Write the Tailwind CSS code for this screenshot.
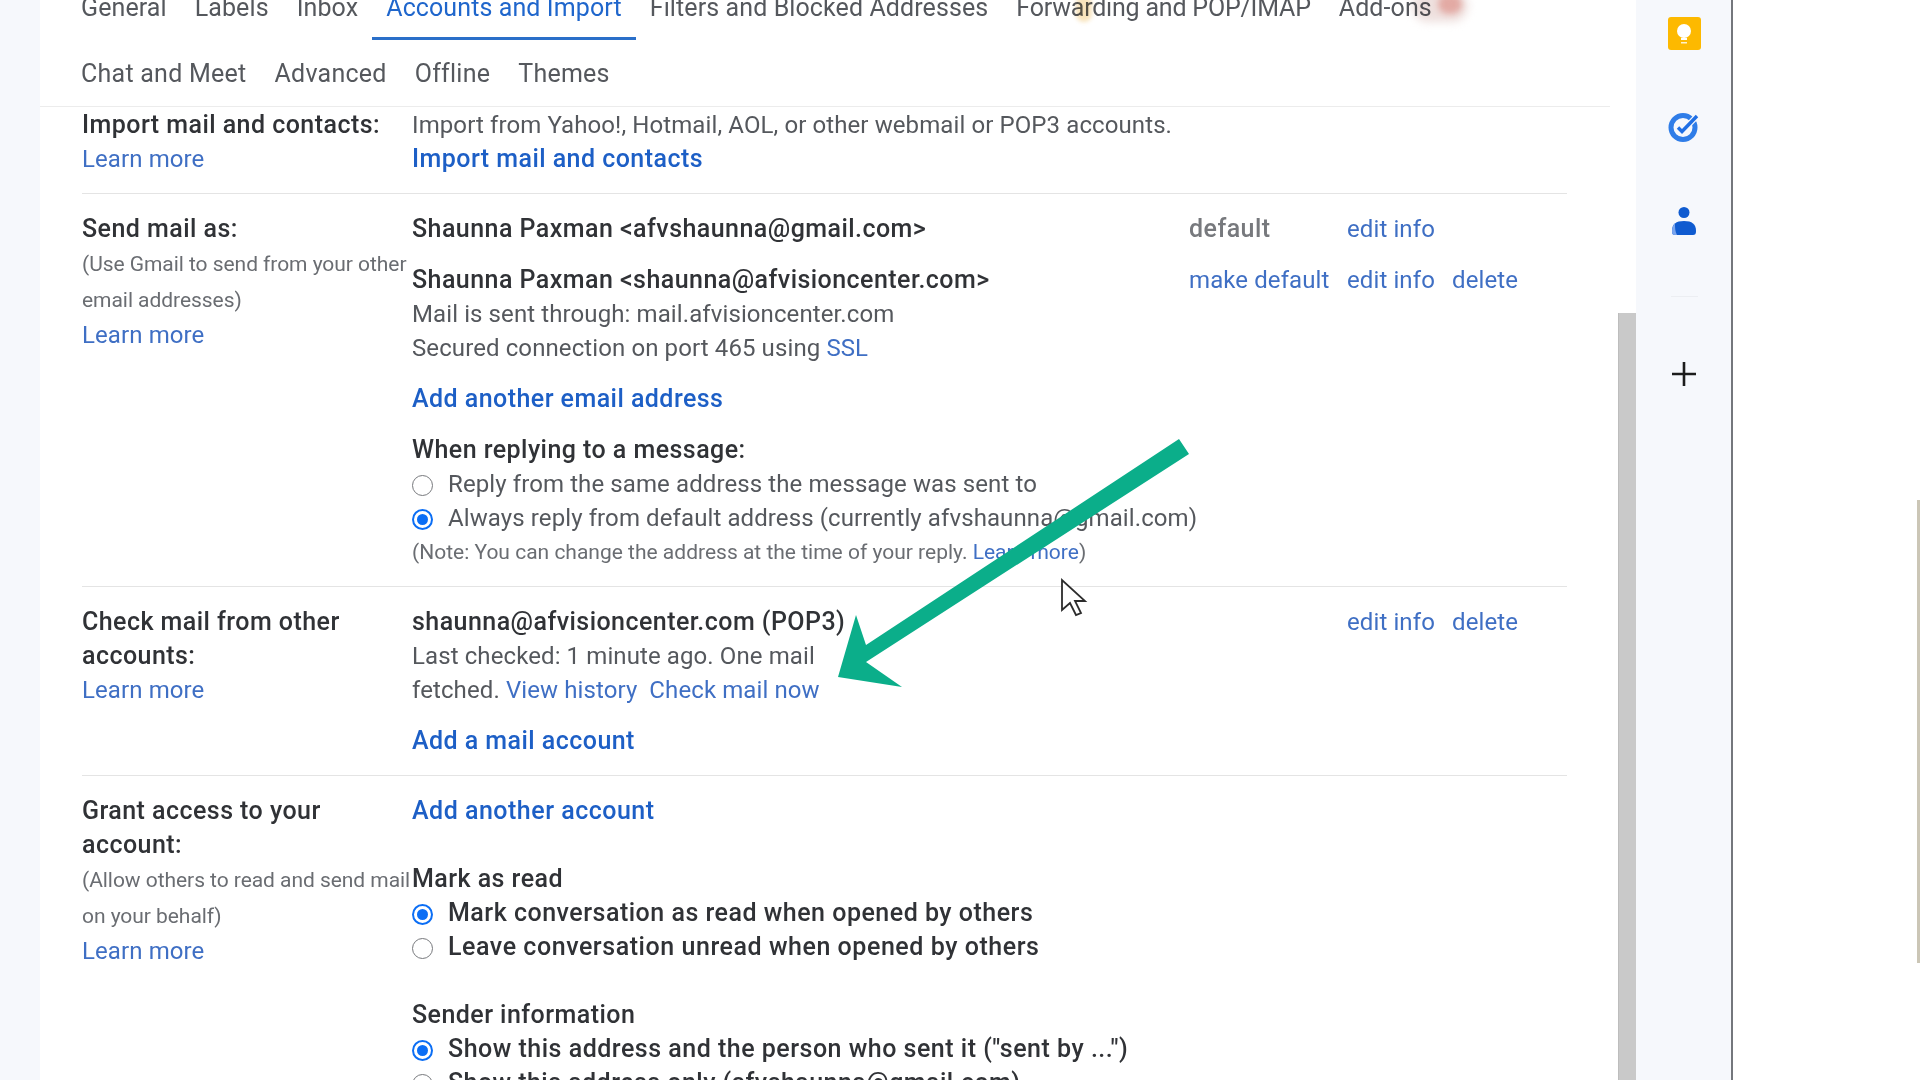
<!DOCTYPE html>
<html lang="en">
<head>
  <meta charset="UTF-8" />
  <title>Gmail Settings - Accounts and Import</title>
  <script src="https://cdn.jsdelivr.net/npm/@tailwindcss/browser@4"></script>
</head>
<body class="bg-white h-screen overflow-hidden [font-family:Roboto,sans-serif] text-[24px] leading-[34px] tracking-[0.1px] text-[#55585d]">
  <div class="relative flex h-[1080px] overflow-hidden">

    <!-- left rail -->
    <div class="w-[40px] shrink-0 bg-[#f6f8fc]"></div>

    <!-- settings pane -->
    <div class="w-[1578px] shrink-0 bg-white blur-[0.7px]">
      <!-- tabs -->
      <div class="h-[116px] -mt-[9px] pl-[27px] flex flex-col border-b border-[#ececec] w-[1570px] text-[25px]">
        <div class="flex h-[49px] tracking-[0.1px]">
          <div class="px-[14px]">General</div>
          <div class="px-[14px]">Labels</div>
          <div class="px-[14px]">Inbox</div>
          <div class="px-[14px] h-[49px] text-[#1f66cc] border-b-[3px] border-[#2a6fc9]">Accounts and Import</div>
          <div class="px-[14px]">Filters and Blocked Addresses</div>
          <div class="px-[14px] tracking-[-0.2px]">Forwarding and POP/IMAP</div>
          <div class="px-[14px]">Add-ons</div>
        </div>
        <div class="flex mt-[17px] tracking-[0.25px]">
          <div class="px-[14px]">Chat and Meet</div>
          <div class="px-[14px]">Advanced</div>
          <div class="px-[14px]">Offline</div>
          <div class="px-[14px]">Themes</div>
        </div>
      </div>

      <div class="pl-[42px] w-[1527px]">
        <!-- import -->
        <div class="flex pt-px pb-[17px] border-b border-[#e4e4e4]">
          <div class="w-[330px] shrink-0">
            <div class="font-medium text-[25px] tracking-[0.45px] text-[#303236]">Import mail and contacts:</div>
            <div class="text-[#3f6fc4]">Learn more</div>
          </div>
          <div>
            <div>Import from Yahoo!, Hotmail, AOL, or other webmail or POP3 accounts.</div>
            <div class="font-medium text-[25px] tracking-[0.45px] text-[#1d5fc6]">Import mail and contacts</div>
          </div>
        </div>

        <!-- send mail as -->
        <div class="flex pt-[18px] pb-[17px] border-b border-[#e4e4e4]">
          <div class="w-[330px] shrink-0">
            <div class="font-medium text-[25px] tracking-[0.45px] text-[#303236]">Send mail as:</div>
            <div class="text-[21px] leading-[36px] tracking-[-0.05px] text-[#6a6d72] whitespace-nowrap">(Use Gmail to send from your other</div>
            <div class="text-[21px] leading-[36px] tracking-[-0.05px] text-[#6a6d72]">email addresses)</div>
            <div class="text-[#3f6fc4]">Learn more</div>
          </div>
          <div class="flex-1">
            <div class="flex">
              <div class="w-[777px] font-medium text-[25px] tracking-[0.45px] text-[#303236]">Shaunna Paxman &lt;afvshaunna@gmail.com&gt;</div>
              <div class="w-[158px] font-medium text-[25px] tracking-[0.45px] text-[#77797d]">default</div>
              <div class="text-[#3f6fc4]">edit info</div>
            </div>
            <div class="flex mt-[17px]">
              <div class="w-[777px]">
                <div class="font-medium text-[25px] tracking-[0.45px] text-[#303236]">Shaunna Paxman &lt;shaunna@afvisioncenter.com&gt;</div>
                <div>Mail is sent through: mail.afvisioncenter.com</div>
                <div>Secured connection on port 465 using <span class="text-[#3f6fc4]">SSL</span></div>
              </div>
              <div class="w-[158px] text-[#3f6fc4]">make default</div>
              <div class="w-[105px] text-[#3f6fc4]">edit info</div>
              <div class="text-[#3f6fc4]">delete</div>
            </div>
            <div class="mt-[17px] font-medium text-[25px] tracking-[0.45px] text-[#1d5fc6]">Add another email address</div>
            <div class="mt-[17px] font-medium text-[25px] tracking-[0.45px] text-[#303236]">When replying to a message:</div>
            <div class="flex items-center">
              <span class="w-[21px] h-[21px] rounded-full border-[1.5px] border-[#77797d] mr-[15px] mt-[2px]"></span>
              <span>Reply from the same address the message was sent to</span>
            </div>
            <div class="flex items-center">
              <span class="w-[21px] h-[21px] rounded-full border-[2px] border-[#0b6ef5] p-[3px] mr-[15px] mt-[2px]"><span class="block w-full h-full rounded-full bg-[#0b6ef5]"></span></span>
              <span>Always reply from default address (currently afvshaunna@gmail.com)</span>
            </div>
            <div class="text-[21px] tracking-normal text-[#6a6d72]">(Note: You can change the address at the time of your reply. <span class="text-[#3f6fc4]">Learn more</span>)</div>
          </div>
        </div>

        <!-- check mail -->
        <div class="flex pt-[18px] pb-[17px] border-b border-[#e4e4e4]">
          <div class="w-[330px] shrink-0">
            <div class="font-medium text-[25px] tracking-[0.45px] text-[#303236]">Check mail from other<br />accounts:</div>
            <div class="text-[#3f6fc4]">Learn more</div>
          </div>
          <div class="flex-1 flex">
            <div class="w-[935px]">
              <div class="font-medium text-[25px] tracking-[0.45px] text-[#303236]">shaunna@afvisioncenter.com (POP3)</div>
              <div>Last checked: 1 minute ago. One mail</div>
              <div>fetched. <span class="text-[#3f6fc4]">View history</span><span class="text-[#3f6fc4] ml-[12px]">Check mail now</span></div>
              <div class="mt-[17px] font-medium text-[25px] tracking-[0.45px] text-[#1d5fc6]">Add a mail account</div>
            </div>
            <div class="w-[105px] text-[#3f6fc4]">edit info</div>
            <div class="text-[#3f6fc4]">delete</div>
          </div>
        </div>

        <!-- grant access -->
        <div class="flex pt-[18px]">
          <div class="w-[330px] shrink-0">
            <div class="font-medium text-[25px] tracking-[0.45px] text-[#303236]">Grant access to your<br />account:</div>
            <div class="text-[21px] leading-[36px] tracking-[-0.05px] text-[#6a6d72] whitespace-nowrap">(Allow others to read and send mail</div>
            <div class="text-[21px] leading-[36px] tracking-[-0.05px] text-[#6a6d72]">on your behalf)</div>
            <div class="text-[#3f6fc4]">Learn more</div>
          </div>
          <div class="flex-1">
            <div class="font-medium text-[25px] tracking-[0.5px] text-[#1d5fc6]">Add another account</div>
            <div class="mt-[34px] font-medium text-[25px] tracking-[0.45px] text-[#303236]">Mark as read</div>
            <div class="flex items-center font-medium text-[25px] tracking-[0.5px] text-[#303236]">
              <span class="w-[21px] h-[21px] rounded-full border-[2px] border-[#0b6ef5] p-[3px] mr-[15px] mt-[2px]"><span class="block w-full h-full rounded-full bg-[#0b6ef5]"></span></span>
              <span>Mark conversation as read when opened by others</span>
            </div>
            <div class="flex items-center font-medium text-[25px] tracking-[0.55px] text-[#303236]">
              <span class="w-[21px] h-[21px] rounded-full border-[1.5px] border-[#77797d] mr-[15px] mt-[2px]"></span>
              <span>Leave conversation unread when opened by others</span>
            </div>
            <div class="mt-[34px] font-medium text-[25px] tracking-[0.45px] text-[#303236]">Sender information</div>
            <div class="flex items-center font-medium text-[25px] tracking-[0.5px] text-[#303236]">
              <span class="w-[21px] h-[21px] rounded-full border-[2px] border-[#0b6ef5] p-[3px] mr-[15px] mt-[2px]"><span class="block w-full h-full rounded-full bg-[#0b6ef5]"></span></span>
              <span>Show this address and the person who sent it ("sent by ...")</span>
            </div>
            <div class="flex items-center font-medium text-[25px] tracking-[0.45px] text-[#303236]">
              <span class="w-[21px] h-[21px] rounded-full border-[1.5px] border-[#77797d] mr-[15px] mt-[2px]"></span>
              <span>Show this address only (afvshaunna@gmail.com)</span>
            </div>
          </div>
        </div>
      </div>
    </div>

    <!-- scrollbar -->
    <div class="w-[18px] shrink-0 pt-[313px] bg-white">
      <div class="h-[767px] bg-[#c9c9c9] border-l border-[#bdbdbd]"></div>
    </div>

    <!-- side panel -->
    <div class="w-[97px] shrink-0 bg-[#f6f8fc] border-r-2 border-[#74777c] flex flex-col items-center pt-[17px] pl-px">
      <div class="w-[33px] h-[33px] rounded-[3px] bg-[#fdb900] flex items-center justify-center">
        <svg width="20" height="24" viewBox="0 0 20 24"><circle cx="10" cy="9" r="7" fill="#fff"/><rect x="7" y="16" width="6" height="2" fill="#fff"/><rect x="7" y="20" width="6" height="1.5" fill="#fff" opacity=".8"/></svg>
      </div>
      <svg class="mt-[62px]" width="32" height="30" viewBox="0 0 32 30" fill="none"><circle cx="15" cy="15.5" r="12" stroke="#2f7de8" stroke-width="5"/><path d="M9.5 15l4.5 4.5 15-15.5" stroke="#f6f8fc" stroke-width="6"/><path d="M10 15.5l4 4 15-15.5" stroke="#1f6fe5" stroke-width="3.4"/></svg>
      <svg class="mt-[65px]" width="26" height="30" viewBox="0 0 26 30"><circle cx="13" cy="5.5" r="5.5" fill="#0f5bd0"/><path d="M1 24c0-7 4-10 12-10s12 3 12 10c0 3-1 4-3 4H4c-2 0-3-1-3-4z" fill="#0f5bd0"/><path d="M1 24c0-3 1-6 3-8 0 5 0 8 2 12H4c-2 0-3-1-3-4z" fill="#7aa5ee"/></svg>
      <div class="mt-[59px] w-[27px] h-px bg-[#eceef2]"></div>
      <svg class="mt-[65px]" width="24" height="24" viewBox="0 0 24 24"><path d="M12 0v24M0 12h24" stroke="#1c1c1c" stroke-width="2.6"/></svg>
    </div>

    <!-- desktop strip -->
    <div class="flex-1 bg-white flex justify-end pt-[500px]">
      <div class="w-[3px] h-[463px] bg-[#cbc6b6]"></div>
    </div>

    <!-- marks on top of the recording -->
    <div class="absolute left-[1076px] -top-[4px] w-[16px] h-[26px] rounded-full bg-[#f8e3bb] mix-blend-multiply blur-[2px]"></div>
    <div class="absolute left-[1412px] -top-[10px] w-[56px] h-[32px] rounded-full bg-[#eee0de] mix-blend-multiply blur-[4px]"></div>
    <div class="absolute left-[1438px] -top-[6px] w-[24px] h-[20px] rounded-full bg-[#f4c2bd] mix-blend-multiply blur-[3px]"></div>
    <svg class="absolute left-0 top-0 pointer-events-none" width="1920" height="1080">
      <polygon points="1179,439 1189,454 866,662 902,687 838,677 856,615 866,645" fill="#0bae8a" />
      <path d="M1062 580v30l8-7 6 12 5-2-6-12h10z" fill="#fff" stroke="#2c2c2c" stroke-width="1.8" />
    </svg>
  </div>
</body>
</html>
